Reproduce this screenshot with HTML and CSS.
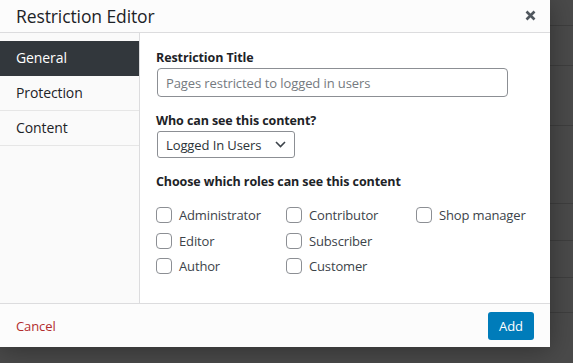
FILE: index.html
```html
<!DOCTYPE html>
<html>
<head>
<meta charset="utf-8">
<link rel="stylesheet" href="styles.css">
</head>
<body>
<div class="backdrop">
  <div class="bd-row r1"></div>
  <div class="bd-row r2"></div>
  <div class="bd-row r3"></div>
  <div class="bd-row r4"></div>
  <div class="bd-row r5"></div>
  <div class="bd-row r6"></div>
  <div class="bd-row r7"></div>
</div>
<div class="modal">
  <div class="modal-header">
    <h1 class="modal-title">Restriction Editor</h1>
    <span class="close" aria-label="Close">
      <svg width="11" height="11" viewBox="0 0 11 11"><path d="M1.5 1.5 L9.5 9.5 M9.5 1.5 L1.5 9.5" stroke="#50575e" stroke-width="2.6" stroke-linecap="butt"/></svg>
    </span>
  </div>
  <div class="modal-body">
    <nav class="sidebar">
      <div class="tab active">General</div>
      <div class="tab">Protection</div>
      <div class="tab">Content</div>
    </nav>
    <div class="content">
      <label class="field-label">Restriction Title</label>
      <div class="text-input"><span class="placeholder">Pages restricted to logged in users</span></div>
      <label class="field-label gap">Who can see this content?</label>
      <div class="select">
        <span>Logged In Users</span>
        <svg width="11" height="7" viewBox="0 0 11 7"><path d="M1 1 L5.5 5.5 L10 1" fill="none" stroke="#3c434a" stroke-width="1.6"/></svg>
      </div>
      <label class="field-label gap">Choose which roles can see this content</label>
      <div class="roles">
        <div class="role"><span class="cb"></span>Administrator</div>
        <div class="role"><span class="cb"></span>Editor</div>
        <div class="role"><span class="cb"></span>Author</div>
        <div class="role"><span class="cb"></span>Contributor</div>
        <div class="role"><span class="cb"></span>Subscriber</div>
        <div class="role"><span class="cb"></span>Customer</div>
        <div class="role"><span class="cb"></span>Shop manager</div>
      </div>
    </div>
  </div>
  <div class="modal-footer">
    <a class="cancel">Cancel</a>
    <button class="add">Add</button>
  </div>
</div>
</body>
</html>
```
FILE: styles.css
```css
* { box-sizing: border-box; }
html, body { margin: 0; padding: 0; }
body {
  width: 573px;
  height: 363px;
  overflow: hidden;
  background: #4a4a4a;
  font-family: "Open Sans", "Noto Sans", sans-serif;
  position: relative;
}
.backdrop { display: flex; flex-direction: column; }
.bd-row { border-bottom: 1px solid #3e3e3e; }
.r1 { height: 26px; }
.r2 { height: 40px; }
.r3 { height: 60px; }
.r4 { height: 78px; }
.r5 { height: 37px; }
.r6 { height: 37px; }
.r7 { height: 35px; }

.modal {
  position: absolute;
  left: 0;
  top: 0;
  width: 550px;
  height: 347px;
  background: #fff;
  display: flex;
  flex-direction: column;
  box-shadow: 0 3px 24px rgba(0,0,0,0.35);
}
.modal-header {
  height: 33px;
  flex: none;
  background: #fcfcfc;
  border-bottom: 1px solid #dcdcde;
  display: flex;
  align-items: center;
  justify-content: space-between;
  padding: 0 14px 0 16px;
}
.modal-title {
  margin: 0;
  font-size: 17.5px;
  font-weight: 400;
  color: #1d2327;
  line-height: 32px;
  letter-spacing: -0.1px;
}
.close { display: flex; margin-top: -1px; }
.modal-body { flex: 1; display: flex; min-height: 0; }
.sidebar {
  width: 140px;
  flex: none;
  background: #fafafa;
  border-right: 1px solid #dcdcde;
  padding-top: 8px;
}
.tab {
  height: 35px;
  line-height: 34px;
  padding-left: 16px;
  font-size: 14px;
  color: #1d2327;
  border-bottom: 1px solid #e6e6e6;
  letter-spacing: -0.1px;
}
.tab.active { background: #32373c; color: #fff; border-bottom-color: #32373c; }
.content {
  flex: 1;
  padding: 16px 16px 0 16px;
  display: flex;
  flex-direction: column;
  align-items: flex-start;
}
.field-label {
  font-size: 12.5px;
  font-weight: 700;
  color: #1d2327;
  line-height: 18px;
  margin-bottom: 1px;
  letter-spacing: -0.1px;
}
.field-label.gap { margin-top: 15px; }
.text-input {
  width: 351px;
  height: 29px;
  margin-left: 1px;
  border: 1px solid #8c8f94;
  border-radius: 4px;
  padding: 0 8px;
  display: flex;
  align-items: center;
  font-size: 13px;
}
.placeholder { color: #757a80; letter-spacing: -0.1px; }
.select {
  width: 138px;
  height: 27px;
  margin-left: 1px;
  border: 1px solid #8c8f94;
  border-radius: 3px;
  padding: 0 8px;
  display: flex;
  align-items: center;
  justify-content: space-between;
  font-size: 13px;
  color: #2c3338;
  letter-spacing: -0.1px;
}
.roles {
  margin-top: 15px;
  display: grid;
  grid-auto-flow: column;
  grid-template-rows: repeat(3, 25.5px);
  grid-template-columns: repeat(3, 130px);
}
.role {
  display: flex;
  align-items: flex-start;
  font-size: 13px;
  color: #3c434a;
  line-height: 16px;
  letter-spacing: -0.15px;
}
.cb {
  width: 16px;
  height: 16px;
  border: 1px solid #8c8f94;
  border-radius: 4px;
  background: #fff;
  margin-right: 7px;
  flex: none;
}
.modal-footer {
  height: 44px;
  flex: none;
  background: #fcfcfc;
  border-top: 1px solid #dcdcde;
  display: flex;
  align-items: center;
  justify-content: space-between;
  padding: 0 16px 0 16px;
}
.cancel { color: #b32d2e; font-size: 13px; letter-spacing: -0.1px; }
.add {
  width: 46px;
  height: 28px;
  margin-top: 1px;
  background: #007cba;
  border: none;
  border-radius: 3px;
  color: #fff;
  font-family: "Open Sans", "Noto Sans", sans-serif;
  font-size: 13px;
  padding: 0;
}
```
